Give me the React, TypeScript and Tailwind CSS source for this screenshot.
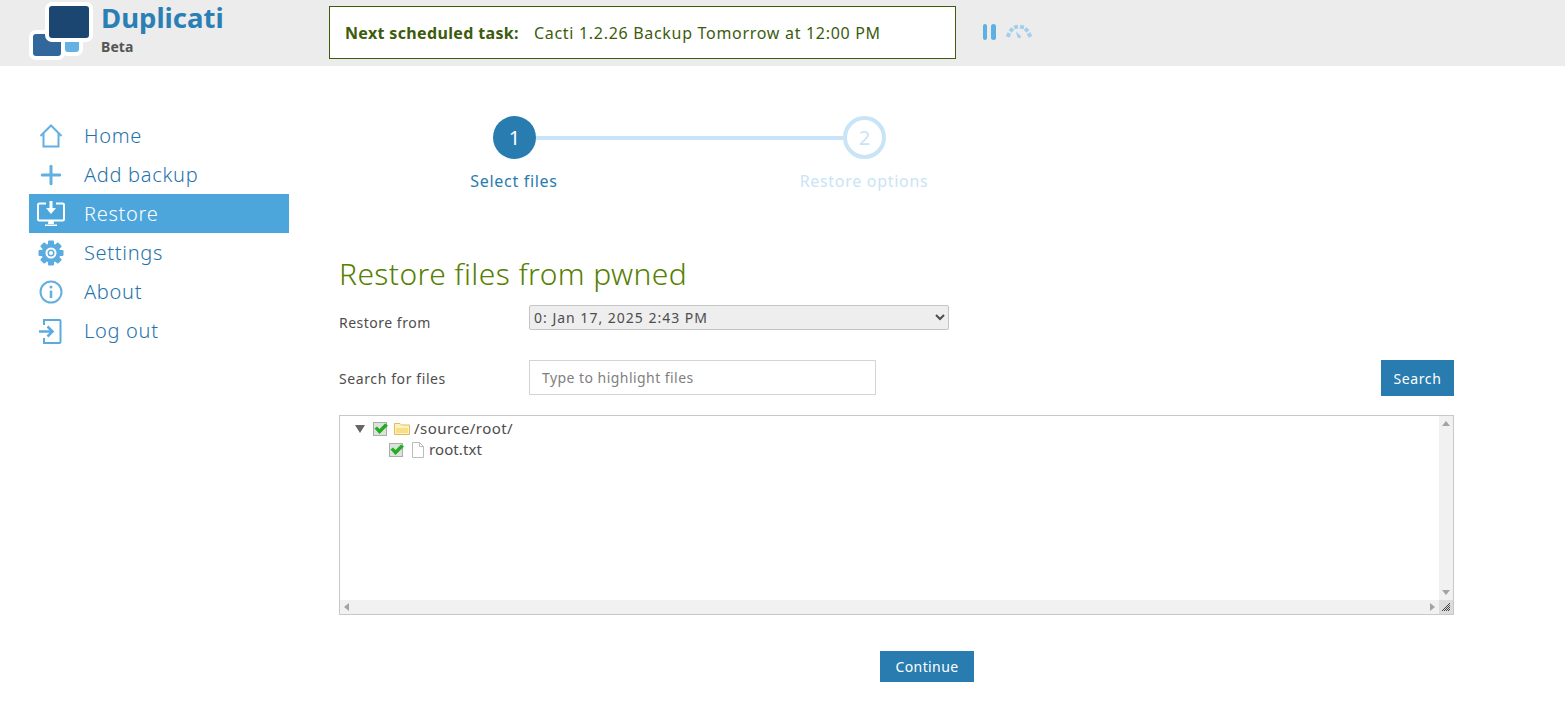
import { Plus } from "lucide-react";

const FONT = "font-['Noto_Sans','Open_Sans',sans-serif]";

function Logo() {
  return (
    <svg width="66" height="62" viewBox="0 0 66 62" className="shrink-0">
      <rect x="34" y="30" width="18" height="24" rx="5" fill="#63b2e3" stroke="#fff" strokeWidth="4" />
      <rect x="2" y="32" width="32" height="26" rx="5" fill="#31679b" stroke="#fff" strokeWidth="4" />
      <rect x="18" y="4" width="44" height="36" rx="5" fill="#1c4672" stroke="#fff" strokeWidth="4" />
    </svg>
  );
}

function HomeIcon() {
  return (
    <svg width="26" height="26" viewBox="0 0 26 26" fill="none" stroke="#63b0e0" strokeWidth="2">
      <path d="M2.500 13 13 2.500 23.500 13" strokeLinejoin="miter" />
      <path d="M5.500 10.500V23.500H20.500V10.500" />
    </svg>
  );
}

function RestoreIcon() {
  return (
    <svg width="28" height="26" viewBox="0 0 28 26" fill="none">
      <path d="M9 2.500H2.500a1.500 1.500 0 0 0-1.500 1.500V18a1.500 1.500 0 0 0 1.500 1.500h23A1.500 1.500 0 0 0 27 18V4a1.500 1.500 0 0 0-1.500-1.500H19" stroke="#fff" strokeWidth="2" />
      <path d="M12.500 0h3v7h3.500l-5 6-5-6h3.500z" fill="#fff" />
      <path d="M11.500 19.500h5l.5 3.500h-6zM8 23.500h12V25H8z" fill="#fff" />
    </svg>
  );
}

function GearIcon() {
  const teeth = [0, 45, 90, 135, 180, 225, 270, 315];
  return (
    <svg width="26" height="26" viewBox="0 0 26 26">
      {teeth.map((a) => (
        <rect key={a} x="10" y="0.500" width="6" height="6" rx="1" fill="#5aace0" transform={`rotate(${a} 13 13)`} />
      ))}
      <circle cx="13" cy="13" r="9.500" fill="#5aace0" />
      <circle cx="13" cy="13" r="5.500" fill="#fff" />
      <circle cx="13" cy="13" r="3.500" fill="#5aace0" />
      <circle cx="13" cy="13" r="2" fill="#fff" />
    </svg>
  );
}

function InfoIcon() {
  return (
    <svg width="26" height="26" viewBox="0 0 26 26" fill="none">
      <circle cx="13" cy="13" r="10.500" stroke="#63b0e0" strokeWidth="2" />
      <circle cx="13" cy="8" r="1.500" fill="#63b0e0" />
      <path d="M13 11.500V19" stroke="#63b0e0" strokeWidth="2.500" />
    </svg>
  );
}

function LogoutIcon() {
  return (
    <svg width="26" height="26" viewBox="0 0 26 26" fill="none" stroke="#5aace0" strokeWidth="2">
      <path d="M6 7V2h15.500a1 1 0 0 1 1 1v21a1 1 0 0 1-1 1H6v-5" />
      <path d="M1 13.500h12" strokeWidth="2.500" />
      <path d="M9.500 8.500 14.500 13.500 9.500 18.500" strokeWidth="2.500" />
    </svg>
  );
}

function Throttle() {
  const segments: [number, number, number][] = [
    [3.500, 11, -65],
    [6.500, 6, -45],
    [11, 3, -12],
    [17, 3, 12],
    [21.500, 6, 45],
    [24.500, 11, 65],
  ];
  return (
    <svg width="28" height="16" viewBox="0 0 28 16" fill="#a3cfeb">
      {segments.map(([x, y, r]) => (
        <rect key={x} x={x - 2} y={y - 2} width="4" height="4" transform={`rotate(${r} ${x} ${y})`} />
      ))}
      <path d="M11 7.500 16 12 15 14.500 12.500 13.500z" />
    </svg>
  );
}

function Check() {
  return (
    <svg width="15" height="15" viewBox="0 0 15 15" className="shrink-0">
      <rect x="0.500" y="1.500" width="13" height="13" fill="#dde2dd" stroke="#a8aea8" />
      <path d="M1.500 7.500 4 5.500 6.500 8 12 2.500l3 2L6.500 13z" fill="#22ad22" />
    </svg>
  );
}

function FolderIcon() {
  return (
    <svg width="16" height="13" viewBox="0 0 16 13" className="shrink-0">
      <path d="M.5 1.500h5.500l1.500 1.500h8v9.500h-15z" fill="#fdf1c0" stroke="#e0bd5c" />
      <path d="M2 6h12v5H2z" fill="#f9de8a" />
    </svg>
  );
}

function FileIcon() {
  return (
    <svg width="14" height="16" viewBox="0 0 14 16" fill="#fff" stroke="#bdbdbd" className="shrink-0">
      <path d="M1.500.5h7l4 4v11h-11z" />
      <path d="M8.500.5v4h4" fill="none" />
    </svg>
  );
}

function Grip() {
  return (
    <svg width="10" height="10" viewBox="0 0 10 10" stroke="#444">
      <path d="M1 9 9 1M3 9 9 3M5 9 9 5M7 9 9 7" />
    </svg>
  );
}

const navItems = [
  { label: "Home", icon: <HomeIcon /> },
  { label: "Add backup", icon: <Plus size={30} strokeWidth={2.4} color="#63b0e0" /> },
  { label: "Restore", icon: <RestoreIcon />, active: true },
  { label: "Settings", icon: <GearIcon /> },
  { label: "About", icon: <InfoIcon /> },
  { label: "Log out", icon: <LogoutIcon /> },
];

export default function App() {
  return (
    <div className={`${FONT} h-[727px] bg-white text-[#4d4d4d] overflow-hidden`}>
      {/* Header */}
      <header className="h-[66px] bg-[#ececec] flex items-start pl-[29px]">
        <Logo />
        <div className="ml-[6px] w-[128px] flex flex-col">
          <span className="text-[27.5px] leading-[38px] -mt-[1px] font-bold text-[#2a7fb5]">Duplicati</span>
          <span className="text-[14px] leading-[20px] font-bold text-[#555] tracking-[0.1px]">Beta</span>
        </div>
        <div className="ml-[100px] mt-[6px] w-[627px] h-[53px] border border-[#3c5c0c] bg-white flex items-center pl-[15px] text-[16px] text-[#3c5c0c]">
          <span className="font-bold tracking-[0.35px]">Next scheduled task:</span>
          <span className="ml-[15px] tracking-[0.7px]">Cacti 1.2.26 Backup Tomorrow at 12:00 PM</span>
        </div>
        <div className="ml-[27px] mt-[24px] flex gap-[4px]">
          <div className="w-[4px] h-[16px] rounded-full bg-[#5eb0e0]" />
          <div className="w-[5px] h-[16px] rounded-full bg-[#5eb0e0]" />
        </div>
        <div className="ml-[9px] mt-[24px]">
          <Throttle />
        </div>
      </header>

      <div className="flex pt-[50px]">
        {/* Sidebar */}
        <nav className="ml-[29px] w-[260px] shrink-0">
          {navItems.map((item) => (
            <div
              key={item.label}
              className={`h-[39px] flex items-center text-[20px] font-light tracking-[0.7px] ${item.active ? "bg-[#4da6db] text-white" : "text-[#1f74ab]"}`}
            >
              <div className="w-[43px] flex justify-center">{item.icon}</div>
              <span className="ml-[12px]">{item.label}</span>
            </div>
          ))}
        </nav>

        {/* Main */}
        <main className="ml-[50px] w-[1115px]">
          <div className="pl-[154px] flex items-center">
            <div className="w-[43px] h-[43px] rounded-full bg-[#287cb0] text-white text-[20px] flex items-center justify-center">1</div>
            <div className="w-[307px] h-[4px] bg-[#c8e4f6]" />
            <div className="w-[43px] h-[43px] rounded-full border-[4px] border-[#c8e4f6] text-[#c8e4f6] text-[20px] flex items-center justify-center">2</div>
          </div>
          <div className="grid grid-cols-[350px_350px] mt-[10px] text-[16px] leading-[24px] text-center tracking-[0.7px]">
            <span className="text-[#287cb0]">Select files</span>
            <span className="text-[#c8e4f6]">Restore options</span>
          </div>

          <h1 className="mt-[60px] text-[30px] leading-[42px] font-light text-[#568000] tracking-[0.4px]">Restore files from pwned</h1>

          <div className="mt-[10px] flex items-start text-[14px] tracking-[0.5px]">
            <label className="w-[190px] mt-[8px] leading-[20px]">Restore from</label>
            <select className="w-[420px] h-[25px] bg-[#eeeeee] border border-[#c4c4c4] rounded-[2px] text-[14px] tracking-[1px] text-[#4d4d4d]">
              <option>0: Jan 17, 2025 2:43 PM</option>
            </select>
          </div>

          <div className="mt-[27px] flex items-start text-[14px] tracking-[0.6px]">
            <label className="w-[190px] self-center">Search for files</label>
            <input
              className="w-[347px] h-[35px] border border-[#d4d4d4] px-[12px] text-[14px] tracking-[0.45px] placeholder:text-[#808080]"
              placeholder="Type to highlight files"
            />
            <button className="ml-auto w-[73px] h-[36px] bg-[#287cb0] text-white text-[14px]">Search</button>
          </div>

          <div className="mt-[19px] h-[200px] border border-[#c8c8c8] flex flex-col">
            <div className="flex-1 flex min-h-0">
              <div className="flex-1 pt-[2px] pl-[15px] text-[15px]">
                <div className="flex items-center h-[21px]">
                  <span className="w-0 h-0 border-l-[5px] border-r-[5px] border-t-[8px] border-l-transparent border-r-transparent border-t-[#666]" />
                  <span className="ml-[8px]"><Check /></span>
                  <span className="ml-[6px]"><FolderIcon /></span>
                  <span className="ml-[4px] tracking-[0.45px]">/source/root/</span>
                </div>
                <div className="flex items-center h-[21px] pl-[34px]">
                  <Check />
                  <span className="ml-[7px]"><FileIcon /></span>
                  <span className="ml-[4px] tracking-[0.1px]">root.txt</span>
                </div>
              </div>
              <div className="w-[14px] bg-[#f1f1f1] flex flex-col items-center justify-between py-[5px]">
                <span className="w-0 h-0 border-l-[4px] border-r-[4px] border-b-[5px] border-l-transparent border-r-transparent border-b-[#a3a3a3]" />
                <span className="w-0 h-0 border-l-[4px] border-r-[4px] border-t-[5px] border-l-transparent border-r-transparent border-t-[#a3a3a3]" />
              </div>
            </div>
            <div className="h-[14px] flex">
              <div className="flex-1 bg-[#f1f1f1] flex items-center justify-between px-[4px]">
                <span className="w-0 h-0 border-t-[4px] border-b-[4px] border-r-[5px] border-t-transparent border-b-transparent border-r-[#a3a3a3]" />
                <span className="w-0 h-0 border-t-[4px] border-b-[4px] border-l-[5px] border-t-transparent border-b-transparent border-l-[#a3a3a3]" />
              </div>
              <div className="w-[14px] bg-[#dcdcdc] flex items-center justify-center"><Grip /></div>
            </div>
          </div>

          <div className="mt-[36px] pl-[541px]">
            <button className="w-[94px] h-[31px] bg-[#287cb0] text-white text-[14px] tracking-[0.4px]">Continue</button>
          </div>
        </main>
      </div>
    </div>
  );
}
